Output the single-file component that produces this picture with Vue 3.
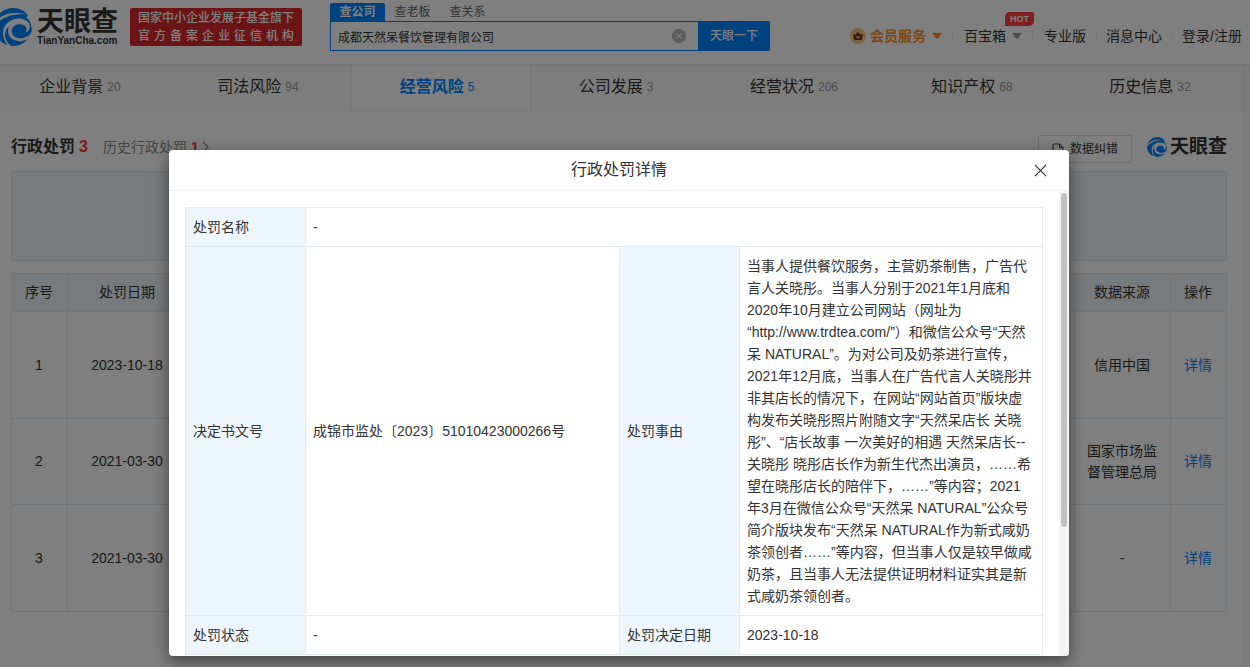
<script setup>
const tabs = [
  { name: '企业背景', count: 20 },
  { name: '司法风险', count: 94 },
  { name: '经营风险', count: 5, active: true },
  { name: '公司发展', count: 3 },
  { name: '经营状况', count: 206 },
  { name: '知识产权', count: 68 },
  { name: '历史信息', count: 32 }
]
const rows = [
  { date: '2023-10-18', source: '信用中国', size: 'tall' },
  { date: '2021-03-30', source: '国家市场监督管理总局', size: 'short' },
  { date: '2021-03-30', source: '-', size: 'tall' }
]
const reason = [
  '当事人提供餐饮服务，主营奶茶制售，广告代言人关晓彤。当事人分别于2021年1月底和2020年10月建立公司网站（网址为',
  '“http://www.trdtea.com/”）和微信公众号“天然呆 NATURAL”。为对公司及奶茶进行宣传，2021年12月底，当事人在广告代言人关晓彤并非其店长的情况下，在网站“网站首页”版块虚构发布关晓彤照片附随文字“天然呆店长 关晓彤”、“店长故事 一次美好的相遇 天然呆店长--关晓彤 晓彤店长作为新生代杰出演员，……希望在晓彤店长的陪伴下，……”等内容；2021年3月在微信公众号“天然呆 NATURAL”公众号简介版块发布“天然呆 NATURAL作为新式咸奶茶领创者……”等内容，但当事人仅是较早做咸奶茶，且当事人无法提供证明材料证实其是新式咸奶茶领创者。'
]
</script>

<template>
  <div class="page">
    <svg class="defs" aria-hidden="true">
      <symbol id="swirl" viewBox="0 0 38 38">
        <path d="M19 0C26 0 31 3 34 8C36 11 37 13 37 17L38 20C37 31 29 38 19 38A19 19 0 0 1 19 0z" fill="#0084ff" />
        <path d="M0 15C7 6 18 3 32 6.500C19 5.500 8 9 0 18z" fill="#fff" />
        <path d="M14 38C7 29 7 18 16 13C23 9 31 10 35 15C37 18 36 23 31 25C33 22 33 19 31 18C27 15 20 16 18 21C17 25 19 29 24 30C29 31 34 29 38 25C35 32 29 34 24 33C16 32 12 25 15 18C9 24 10 32 17 38z" fill="#fff" />
        <path d="M23 20C27 17 30 18 31 20C31 23 28 24 26 24C28 22 27 20 23 20z" fill="#0084ff" />
        <path d="M34 8L38 13L38 21C37 16 36 12 32 9z" fill="#fff" />
      </symbol>
    </svg>
    <header class="header">
      <a class="logo" href="#" aria-label="天眼查">
        <svg class="logo-mark" aria-hidden="true"><use href="#swirl" /></svg>
        <span class="logo-words">
          <span class="logo-cn">天眼查</span>
          <span class="logo-en">TianYanCha.com</span>
        </span>
      </a>
      <div class="slogan">
        <span>国家中小企业发展子基金旗下</span>
        <span class="slogan-wide"><i v-for="c in '官方备案企业征信机构'" :key="c">{{ c }}</i></span>
      </div>
      <form class="search" @submit.prevent>
        <div class="search-tabs">
          <button type="button" class="on">查公司</button>
          <button type="button">查老板</button>
          <button type="button">查关系</button>
        </div>
        <div class="search-row">
          <input type="text" aria-label="公司名称" value="成都天然呆餐饮管理有限公司" />
          <button type="button" class="clear" aria-label="清除">
            <svg viewBox="0 0 14 14"><circle cx="7" cy="7" r="7" fill="#b8b8b8" /><path d="M4.300 4.300l5.400 5.400M9.700 4.300l-5.400 5.400" stroke="#fff" stroke-width="1.200" /></svg>
          </button>
          <button type="submit" class="go">天眼一下</button>
        </div>
      </form>
      <nav class="links">
        <a href="#" class="vip">
          <svg class="crown" viewBox="0 0 16 16"><circle cx="8" cy="8" r="8" fill="#ffc88c" /><path d="M3 5.400l2.600 1.500L8 3.600l2.400 3.300L13 5.400l-.8 5.100Q12 12 10.600 12H5.400Q4 12 3.800 10.500z" fill="#6b3518" /><path d="M6.200 8.300L8 10l1.800-1.700" fill="none" stroke="#ffc88c" stroke-width="1.200" /></svg>
          会员服务<svg class="caret" viewBox="0 0 10 6"><path d="M1 0h8q1 0 .4.900L5.700 5.500q-.7.800-1.400 0L.6.900Q0 0 1 0z" fill="#ff8a1f" /></svg>
        </a>
        <a href="#" class="box">百宝箱<svg class="caret" viewBox="0 0 10 6"><path d="M1 0h8q1 0 .4.900L5.700 5.500q-.7.800-1.400 0L.6.900Q0 0 1 0z" fill="#999" /></svg><b class="hot">HOT</b></a>
        <a href="#">专业版</a>
        <a href="#">消息中心</a>
        <a href="#">登录/注册</a>
      </nav>
    </header>

    <main class="main">
      <nav class="tabs">
        <a v-for="t in tabs" :key="t.name" href="#" :class="{ active: t.active }">{{ t.name }}<small>{{ t.count }}</small></a>
      </nav>
      <section class="section">
        <div class="section-head">
          <h2>行政处罚<em>3</em></h2>
          <a href="#" class="history">历史行政处罚<em>1</em><svg viewBox="0 0 7 12"><path d="M1 1l5 5-5 5" fill="none" stroke="#888" stroke-width="1.300" /></svg></a>
          <button type="button" class="fix">
            <svg viewBox="0 0 12 13"><path d="M7.500 1H2q-1 0-1 1v9q0 1 1 1h2M7.500 1L11 4.500V11q0 1-1 1H8M7.500 1v3.500H11M4 9.500L7 6.500M5 12l3-3" fill="none" stroke="#333" /></svg>
            数据纠错
          </button>
          <span class="brand"><svg aria-hidden="true"><use href="#swirl" /></svg>天眼查</span>
        </div>
        <div class="filter"></div>
        <table class="list">
          <colgroup><col class="c-no" /><col class="c-date" /><col /><col class="c-src" /><col class="c-op" /></colgroup>
          <thead><tr><th>序号</th><th>处罚日期</th><th></th><th>数据来源</th><th>操作</th></tr></thead>
          <tbody>
            <tr v-for="(r, i) in rows" :key="i" :class="r.size">
              <td>{{ i + 1 }}</td><td>{{ r.date }}</td><td></td><td>{{ r.source }}</td><td><a href="#">详情</a></td>
            </tr>
          </tbody>
        </table>
      </section>
    </main>

    <div class="mask">
      <div class="dialog" role="dialog" aria-labelledby="dialog-title">
        <div class="dialog-head">
          <h3 id="dialog-title">行政处罚详情</h3>
          <button type="button" class="close" aria-label="关闭"><svg viewBox="0 0 14 14"><path d="M1 1l12 12M13 1L1 13" stroke="#333" stroke-width="1.300" /></svg></button>
        </div>
        <div class="dialog-body">
          <table class="detail">
            <colgroup><col class="d-label" /><col /><col class="d-label" /><col class="d-value" /></colgroup>
            <tbody>
              <tr><th>处罚名称</th><td colspan="3">-</td></tr>
              <tr><th>决定书文号</th><td>成锦市监处〔2023〕51010423000266号</td><th>处罚事由</th><td>{{ reason[0] }}<wbr />{{ reason[1] }}</td></tr>
              <tr><th>处罚状态</th><td>-</td><th>处罚决定日期</th><td>2023-10-18</td></tr>
            </tbody>
          </table>
          <div class="track"><div class="thumb"></div></div>
        </div>
      </div>
    </div>
  </div>
</template>

<style>
body { margin: 0; overflow: hidden; }
</style>

<style scoped>
* { box-sizing: border-box; }
.page { position: relative; height: 100vh; overflow: hidden; background: #f6f6f6; color: #333; font: 14px/22px "Liberation Sans", "Noto Sans CJK SC", sans-serif; text-spacing-trim: space-all; }
a { color: inherit; text-decoration: none; }
button { padding: 0; border: 0; background: none; color: inherit; font: inherit; cursor: pointer; }
svg { display: block; flex: none; }
.defs { position: absolute; width: 0; height: 0; }
em, i { font-style: normal; }
.header { position: relative; display: flex; height: 64px; background: #fff; box-shadow: 0 1px 3px rgba(0, 0, 0, .12); z-index: 1; }
.logo { display: flex; flex: none; width: 130px; padding-top: 8px; overflow: hidden; }
.logo-mark { width: 38px; height: 38px; margin-left: -6px; }
.logo-words { display: flex; flex-direction: column; margin-left: 5px; }
.logo-cn { font-size: 27px; line-height: 28px; font-weight: 700; }
.logo-en { font-size: 10px; line-height: 10px; font-weight: 700; }
.slogan { display: flex; flex-direction: column; flex: none; width: 172px; height: 38px; margin-top: 8px; padding: 1px 8px; border-radius: 2px; background: #d9262b; color: #fff; font-size: 12px; line-height: 18px; white-space: nowrap; font-weight: 500; }
.slogan-wide { display: flex; justify-content: space-between; }
.search { width: 440px; margin-left: 28px; padding-top: 3px; }
.search-tabs { display: flex; height: 18px; font-size: 12px; line-height: 18px; color: #666; }
.search-tabs button { width: 55px; }
.search-tabs .on { background: #0084ff; color: #fff; border-radius: 2px 2px 0 0; font-weight: 700; }
.search-row { display: flex; position: relative; height: 30px; }
.search-row input { flex: 1; min-width: 0; padding: 0 7px; border: 1px solid #0084ff; border-right: 0; outline: 0; background: #fff; color: #333; font: 12px "Liberation Sans", "Noto Sans CJK SC", sans-serif; }
.clear { position: absolute; right: 84px; top: 8px; }
.clear svg { width: 14px; height: 14px; }
.go { width: 72px; border-radius: 0 2px 2px 0; background: #0084ff; color: #fff; font-size: 12px; font-weight: 500; }
.links { display: flex; margin-left: auto; padding: 25px 8px 0 0; white-space: nowrap; }
.links a { position: relative; display: flex; align-items: center; height: 22px; padding-left: 20px; }
.links a + a::before { content: ""; position: absolute; left: 10px; top: 5px; height: 12px; border-left: 1px solid #eee; }
.links .vip { color: #ff8a1f; font-weight: 700; }
.crown { width: 16px; height: 16px; margin-right: 4px; }
.caret { width: 10px; height: 6px; margin-left: 6px; }
.links .vip + a { padding-left: 22px; }
.links .box + a { padding-left: 22px; }
.hot { position: absolute; right: -12px; top: -13px; padding: 0 5px; border-radius: 5px 2px 5px 0; background: #ff3d3d; color: #fff; font-size: 9px; line-height: 14px; }
.main { margin-right: 6px; min-height: 100%; background: #fff; border-right: 1px solid #eee; overflow: hidden; }
.tabs { display: flex; height: 47px; margin-left: -5px; background: #fafafa; border-bottom: 1px solid #eee; }
.tabs a { flex: 1; display: flex; justify-content: center; align-items: center; font-size: 16px; padding-right: 8px; }
.tabs a.active { background: #fff; border: solid #eee; border-width: 0 1px; color: #0084ff; font-weight: 700; }
.tabs small { margin-left: 4px; color: #999; font-size: 12px; font-weight: 400; }
.tabs .active small { color: #0084ff; }
.section { padding: 24px 16px 0 11px; }
.section-head { display: flex; align-items: flex-start; height: 36px; }
.section-head em { color: #fb2e2e; font-weight: 700; margin-left: 4px; }
h2 { margin: 0; font-size: 16px; line-height: 24px; }
.history { display: flex; align-items: center; margin-left: 15px; color: #888; line-height: 24px; }
.history svg { width: 7px; height: 12px; margin-left: 3px; }
.fix { display: flex; align-items: center; justify-content: center; gap: 6px; width: 94px; height: 28px; margin-left: auto; border: 1px solid #ddd; border-radius: 2px; font-size: 12px; }
.fix svg { width: 12px; height: 13px; }
.brand { display: flex; align-items: center; gap: 3px; height: 24px; margin-left: 15px; font-size: 19px; font-weight: 700; }
.brand svg { width: 20px; height: 20px; }
.filter { height: 90px; border: 1px solid #dcebf5; background: #eef6fd; }
table { border-collapse: collapse; table-layout: fixed; width: 100%; }
.list { margin-top: 12px; text-align: center; }
.list th, .list td { border: 1px solid #dfeaf2; padding: 0 13px 0 12px; font-weight: 400; line-height: 21px; }
.list th { height: 38px; background: #eef6fd; }
.list a { color: #0084ff; }
.tall td { height: 107px; }
.short td { height: 86px; }
.c-no { width: 56px; }
.c-date { width: 120px; }
.c-src { width: 96px; }
.c-op { width: 56px; }
.mask { position: absolute; inset: 0; z-index: 2; display: flex; justify-content: center; align-items: flex-end; padding: 0 12px 11px 0; background: rgba(0, 0, 0, .5); }
.dialog { width: 900px; height: 506px; display: flex; flex-direction: column; overflow: hidden; border-radius: 4px; background: #fff; box-shadow: 0 5px 16px rgba(0, 0, 0, .5); }
.dialog-head { position: relative; flex: none; height: 41px; border-bottom: 1px solid #eee; }
h3 { margin: 0; font-size: 16px; line-height: 40px; font-weight: 400; text-align: center; }
.close { position: absolute; right: 22px; top: 14px; }
.close svg { width: 13px; height: 13px; }
.dialog-body { display: flex; flex: 1; min-height: 0; padding-left: 16px; overflow: hidden; }
.detail { flex: 1; width: auto; margin: 16px 16px 0 0; align-self: flex-start; }
.detail th, .detail td { padding: 8px 8px 8px 7px; border: 1px solid #dfebf2; text-align: left; font-weight: 400; }
.detail th { background: #eef6fd; }
.d-label { width: 120px; }
.d-value { width: 303px; }
.track { flex: none; width: 10px; padding: 2px; background: #f5f5f5; }
.thumb { height: 334px; border-radius: 3px; background: #c1c1c1; }
</style>
